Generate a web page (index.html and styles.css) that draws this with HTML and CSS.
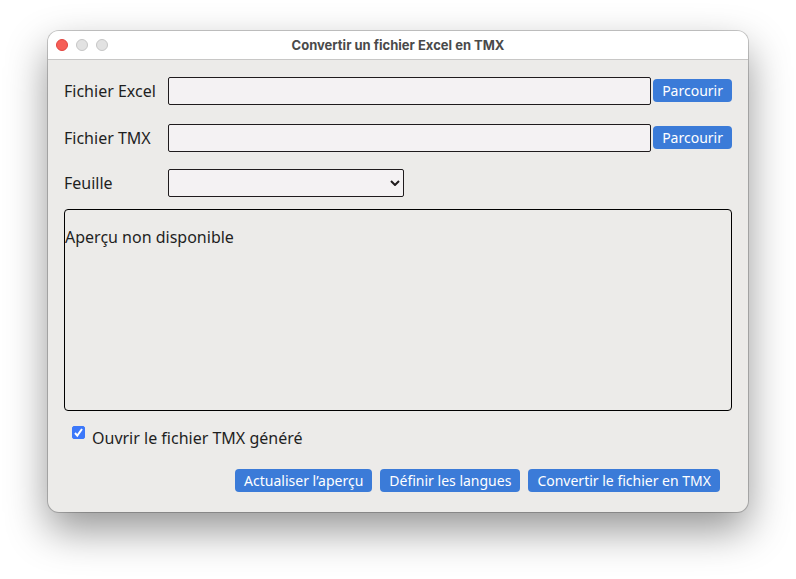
FILE: index.html
```html
<!DOCTYPE html>
<html lang="fr">
<head>
<meta charset="utf-8">
<meta name="viewport" content="width=device-width, initial-scale=1">
<title>Convertir un fichier Excel en TMX</title>
<link rel="stylesheet" href="styles.css">
</head>
<body>
<main class="window">
  <header class="titlebar">
    <div class="lights">
      <span class="light light-close"></span>
      <span class="light"></span>
      <span class="light"></span>
    </div>
    <h1 class="title">Convertir un fichier Excel en TMX</h1>
  </header>
  <form class="content">
    <div class="row">
      <label class="label" for="excel">Fichier Excel</label>
      <input class="field" id="excel" type="text">
      <button class="button" type="button">Parcourir</button>
    </div>
    <div class="row">
      <label class="label" for="tmx">Fichier TMX</label>
      <input class="field" id="tmx" type="text">
      <button class="button" type="button">Parcourir</button>
    </div>
    <div class="row row-sheet">
      <label class="label" for="sheet">Feuille</label>
      <div class="select">
        <select class="field" id="sheet"></select>
        <svg class="chevron" viewBox="0 0 10 6" aria-hidden="true"><path d="M1 1l4 4 4-4"/></svg>
      </div>
    </div>
    <section class="preview">
      <p class="message">Aperçu non disponible</p>
    </section>
    <div class="option">
      <span class="check">
        <input class="box" id="open" type="checkbox" checked>
        <svg class="tick" viewBox="0 0 13 13" aria-hidden="true"><path d="M3 7l2.300 2.600L10 3"/></svg>
      </span>
      <label class="option-label" for="open">Ouvrir le fichier TMX généré</label>
    </div>
    <div class="actions">
      <button class="button" type="button">Actualiser l’aperçu</button>
      <button class="button" type="button">Définir les langues</button>
      <button class="button" type="button">Convertir le fichier en TMX</button>
    </div>
  </form>
</main>
</body>
</html>
```
FILE: styles.css
```css
* {
  box-sizing: border-box;
}

body {
  margin: 0;
  padding: 31px 48px 67px;
  min-height: 100vh;
  display: flex;
  background: #fff;
  color: #1f1f1f;
  font: 16px/22px "Noto Sans", sans-serif;
}

.window {
  flex: 1;
  min-width: 0;
  border-radius: 11px;
  background: #ecebe9;
  box-shadow: 0 0 0 1px rgba(0, 0, 0, 0.2), 0 18px 42px rgba(0, 0, 0, 0.42);
}

.titlebar {
  display: grid;
  grid-template-columns: 1fr auto 1fr;
  align-items: center;
  height: 29px;
  padding: 0 8px;
  border-bottom: 1px solid #c8c7c6;
  border-radius: 11px 11px 0 0;
  background: #fff;
}

.lights {
  display: flex;
  gap: 8px;
}

.light {
  width: 12px;
  height: 12px;
  border: 1px solid #c6c6c6;
  border-radius: 50%;
  background: #e2e2e2;
}

.light-close {
  border-color: #e2443f;
  background: #f65f57;
}

.title {
  margin: 0;
  color: #4a4a4a;
  font: bold 13px/16px Inter, sans-serif;
}

.content {
  padding: 17px 16px 20px;
}

.row {
  display: flex;
  align-items: center;
  gap: 2px;
  margin-bottom: 19px;
}

.row-sheet {
  margin: -2px 0 12px;
}

.label {
  width: 102px;
}

.field {
  flex: 1;
  min-width: 0;
  width: 100%;
  height: 28px;
  margin: 0;
  padding: 0 6px;
  border: 1px solid #1f1b1d;
  border-radius: 2px;
  background: #f4f2f3;
  color: inherit;
  font: inherit;
  appearance: none;
}

.select {
  display: flex;
  position: relative;
  width: 236px;
}

.chevron {
  position: absolute;
  top: 11px;
  right: 4px;
  width: 10px;
  height: 6px;
  fill: none;
  stroke: #1f1b1d;
  stroke-width: 2;
  pointer-events: none;
}

.button {
  height: 23px;
  padding: 0 9px;
  border: 0;
  border-radius: 4px;
  background: #3b7bd8;
  color: #fff;
  font: 14px/22px "Noto Sans", sans-serif;
}

.row .button {
  margin-bottom: 1px;
}

.preview {
  height: 202px;
  padding-top: 16px;
  border: 1px solid #000;
  border-radius: 4px;
}

.message {
  margin: 0;
}

.option {
  display: flex;
  gap: 7px;
  padding: 15px 8px 0;
}

.check {
  position: relative;
  width: 13px;
  height: 13px;
}

.box {
  display: block;
  width: 13px;
  height: 13px;
  margin: 0;
  border: 1px solid #767676;
  border-radius: 2px;
  background: #fff;
  appearance: none;
}

.box:checked {
  border-color: #3c78fa;
  background: #3c78fa;
}

.tick {
  position: absolute;
  inset: 0;
  fill: none;
  stroke: #fff;
  stroke-width: 2;
  pointer-events: none;
}

.box:not(:checked) + .tick {
  display: none;
}

.option-label {
  padding-top: 1px;
}

.actions {
  display: flex;
  justify-content: flex-end;
  gap: 8px;
  padding: 20px 12px 0 0;
}
```
